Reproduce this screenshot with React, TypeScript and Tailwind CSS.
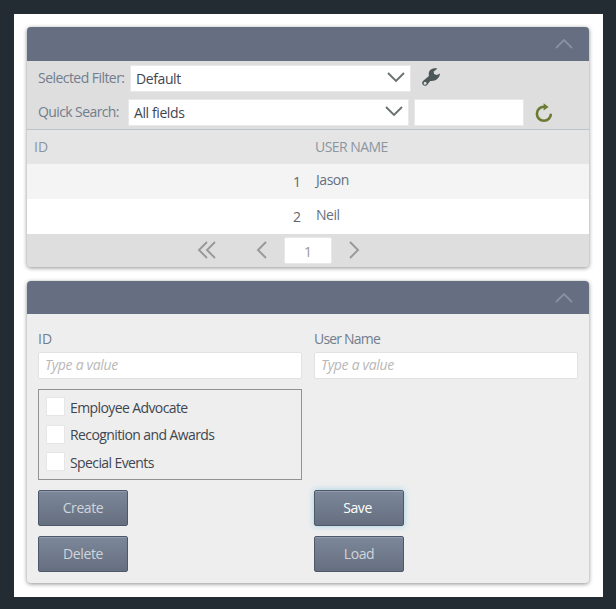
import React from "react";

const users = [
  { id: 1, name: "Jason" },
  { id: 2, name: "Neil" },
];

const interests = ["Employee Advocate", "Recognition and Awards", "Special Events"];

function Chevron({ points, className }: { points: string; className: string }) {
  return (
    <svg className={className} viewBox="0 0 18 18" fill="none" stroke="currentColor" strokeWidth="1.9">
      <polyline points={points} />
    </svg>
  );
}

function WrenchIcon({ className }: { className: string }) {
  return (
    <svg className={className} viewBox="0 0 18 18" fill="currentColor">
      <path
        fillRule="evenodd"
        d="M15.4 0.7C12 -0.4 8.2 0.8 7 4C6.6 5.3 6.7 6.6 6.9 7.9L1 12.9C-0.2 14.2 -0.1 16 1 17.1C2.2 18.2 4 18.1 5.1 16.9L8.2 12.9C10.6 13.3 13.6 12.7 15.5 10.8C17 9.4 17.8 7.8 18 5.6L14.8 7L12 6L11.7 3.4ZM3.1 13.7A1.5 1.5 0 1 1 3.1 16.7A1.5 1.5 0 1 1 3.1 13.7Z"
      />
    </svg>
  );
}

function PanelHeader({ className }: { className: string }) {
  return (
    <div className={`flex items-center justify-end rounded-t-[4px] bg-[#656f81] pr-4 ${className}`}>
      <button type="button" aria-label="Collapse panel">
        <Chevron points="1,13 9,5 17,13" className="h-[18px] w-[18px] text-[#8791a0]" />
      </button>
    </div>
  );
}

function Select({ value }: { value: string }) {
  return (
    <div className="flex h-[27px] w-[281px] shrink-0 items-center justify-between border border-[#e8e8e8] bg-white pr-[5px] pl-[5px] tracking-[-0.4px] text-[#3f4650]">
      <span>{value}</span>
      <Chevron points="1,5 9,13 17,5" className="-mt-[3px] h-[18px] w-[18px] text-[#69716f]" />
    </div>
  );
}

function Field({ label, tracking }: { label: string; tracking: string }) {
  return (
    <label className="block">
      <span className={`block h-[23px] leading-[20px] text-[#727d8d] ${tracking}`}>{label}</span>
      <input
        type="text"
        placeholder="Type a value"
        className="block h-[27px] w-[264px] rounded-[2px] border border-[#e2e2e2] bg-white px-[6px] pb-[2px] tracking-[-0.3px] italic placeholder:text-[#b8b8b8]"
      />
    </label>
  );
}

function ActionButton({ children, active }: { children: React.ReactNode; active?: boolean }) {
  return (
    <button
      type="button"
      className={`h-9 w-[90px] rounded-[2px] border border-[#4d596b] bg-linear-to-b from-[#7c8799] to-[#656f80] tracking-[-0.4px] ${
        active
          ? "pr-[3px] text-white shadow-[0_0_6px_#9fd0e6,inset_0_1px_0_#929cae]"
          : "text-[#d0d5db] shadow-[inset_0_1px_0_#929cae]"
      }`}
    >
      {children}
    </button>
  );
}

export default function App() {
  return (
    <div className="h-[609px] w-[616px] bg-[#242c33] py-[14px] pl-[14px] font-['Open_Sans','Noto_Sans',sans-serif] text-[14px] leading-[20px]">
      <div className="h-[583px] w-[589px] bg-white p-[13px]">
        {/* Users list */}
        <section className="h-[240px] w-[562px] rounded-[4px] bg-[#dedede] shadow-[0_1px_4px_rgba(0,0,0,0.45)]">
          <PanelHeader className="h-[34px]" />

          <div className="h-[69px] border-b border-[#bcc3cd] pt-[4px] pl-[11px] text-[#727d8d]">
            <div className="flex h-[27px] items-center">
              <span className="w-[92px] pb-px whitespace-nowrap tracking-[-0.55px]">Selected Filter:</span>
              <Select value="Default" />
              <WrenchIcon className="mb-[3px] ml-[11px] h-[18px] w-[18px] text-[#4c5758]" />
            </div>
            <div className="mt-[7px] flex h-[27px] items-center">
              <span className="w-[90px] pb-px whitespace-nowrap tracking-[-0.6px]">Quick Search:</span>
              <Select value="All fields" />
              <input type="text" aria-label="Search" className="ml-[5px] h-[27px] w-[110px] border border-[#e8e8e8] bg-white" />
              <button type="button" aria-label="Refresh" className="ml-[11px]">
                <svg className="h-[20px] w-[18px] text-[#6b7c32]" viewBox="0 0 18 20" fill="none">
                  <path d="M9 3.8A7 7 0 1 0 15.9 10.8" stroke="currentColor" strokeWidth="2.6" />
                  <path d="M8.6 0.2L13.6 3.9L8.6 7.4Z" fill="currentColor" />
                </svg>
              </button>
            </div>
          </div>

          <div className="grid h-[34px] grid-cols-[281px_281px] items-center bg-[#e5e5e5] text-[#8d95a0]">
            <span className="pl-[7px]">ID</span>
            <span className="pl-[7px] tracking-[-0.55px]">USER NAME</span>
          </div>
          {users.map((user) => (
            <div key={user.id} className="grid h-[35px] grid-cols-[281px_281px] items-center odd:bg-white even:bg-[#f4f4f4]">
              <span className="pr-[7px] text-right text-[#62656a]">{user.id}</span>
              <span className="pb-[3px] pl-[8px] tracking-[-0.45px] text-[#657080]">{user.name}</span>
            </div>
          ))}

          <div className="flex h-[33px] items-center pl-[170px] text-[#989898]">
            <div className="-mt-[2px] flex">
              <Chevron points="10,1 2,9 10,17" className="h-[18px] w-[18px]" />
              <Chevron points="10,1 2,9 10,17" className="-ml-[10px] h-[18px] w-[18px]" />
            </div>
            <Chevron points="13,1 5,9 13,17" className="-mt-[2px] ml-[30px] h-[18px] w-[18px]" />
            <div className="ml-[13px] h-[27px] w-[48px] rounded-[2px] border border-[#e8e8e8] bg-white text-center leading-[27px]">1</div>
            <Chevron points="5,1 13,9 5,17" className="-mt-[2px] ml-[13px] h-[18px] w-[18px]" />
          </div>
        </section>

        {/* User details */}
        <section className="mt-[14px] h-[302px] w-[562px] rounded-[4px] bg-[#eeeeee] shadow-[0_1px_4px_rgba(0,0,0,0.45)]">
          <PanelHeader className="h-[33px]" />

          <div className="grid grid-cols-[276px_264px] pt-[15px] pl-[11px]">
            <Field label="ID" tracking="tracking-normal" />
            <Field label="User Name" tracking="tracking-[-0.8px]" />
          </div>

          <div className="mt-[10px] ml-[11px] flex h-[91px] w-[264px] flex-col gap-[8px] border border-[#929292] pt-[7px] pl-[7px]">
            {interests.map((interest) => (
              <label key={interest} className="flex h-[19.5px] items-center text-[#3f4650]">
                <input type="checkbox" className="h-[19px] w-[19px] appearance-none border border-[#e6e6e6] bg-white" />
                <span className="ml-[5px] pt-[2px] tracking-[-0.6px]">{interest}</span>
              </label>
            ))}
          </div>

          <div className="mt-[10px] ml-[11px] grid grid-cols-[276px_90px] gap-y-[10px]">
            <ActionButton>Create</ActionButton>
            <ActionButton active>Save</ActionButton>
            <ActionButton>Delete</ActionButton>
            <ActionButton>Load</ActionButton>
          </div>
        </section>
      </div>
    </div>
  );
}
